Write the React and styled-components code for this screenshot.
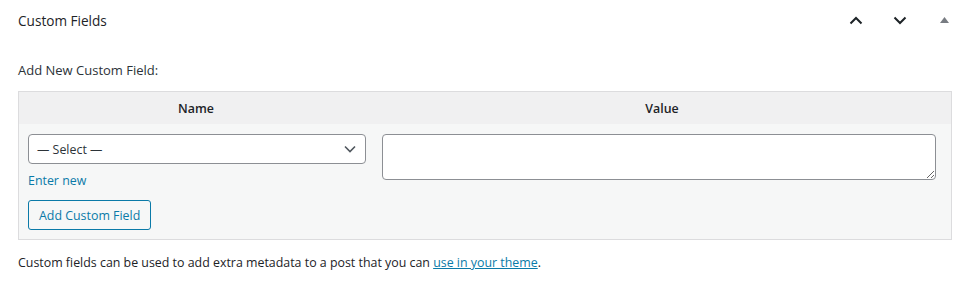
import React from "react";
import styled, { createGlobalStyle } from "styled-components";

const GlobalStyle = createGlobalStyle`
  html, body {
    margin: 0;
    padding: 0;
    background: #fff;
  }
  body {
    font-family: "Open Sans", "Noto Sans", sans-serif;
    font-size: 12.4px;
    color: #1d2327;
  }
  * {
    box-sizing: border-box;
  }
`;

const Box = styled.div`
  width: 960px;
  height: 284px;
  background: #fff;
`;

const Header = styled.div`
  height: 40px;
  display: flex;
  align-items: center;
  justify-content: space-between;
  padding: 0 4px 0 18px;
`;

const Title = styled.h2`
  margin: 0;
  font-size: 13.6px;
  font-weight: 500;
  color: #1d2327;
`;

const Controls = styled.div`
  display: flex;
  align-items: center;
  gap: 20px;
`;

const IconButton = styled.button`
  width: 24px;
  height: 24px;
  padding: 0;
  border: 0;
  background: none;
  display: flex;
  align-items: center;
  justify-content: center;
  color: ${(p) => (p.$muted ? "#787c82" : "#1d2327")};
`;

const Inside = styled.div`
  padding: 21px 8px 0 18px;
`;

const Label = styled.p`
  margin: 0 0 12px;
  line-height: 18px;
  font-size: 13px;
  font-weight: 400;
  color: #2c3338;
`;

const Table = styled.div`
  border: 1px solid #dcdcde;
  background: #f6f7f7;
  display: grid;
  grid-template-columns: 354px 1fr;
`;

const HeadCell = styled.div`
  background: #f0f0f1;
  height: 32px;
  display: flex;
  align-items: center;
  justify-content: center;
  font-weight: 600;
`;

const Cell = styled.div`
  padding: 10px ${(p) => p.$right || 7}px 9px 9px;
  display: flex;
  flex-direction: column;
  align-items: flex-start;
`;

const SelectWrap = styled.div`
  position: relative;
  width: 338px;
`;

const Select = styled.select`
  appearance: none;
  width: 100%;
  height: 30px;
  border: 1px solid #8c8f94;
  border-radius: 4px;
  background: #fff;
  padding: 0 24px 0 8px;
  font-family: inherit;
  font-size: 12.4px;
  color: #2c3338;
`;

const Chevron = styled.svg`
  position: absolute;
  right: 10px;
  top: 11px;
  pointer-events: none;
`;

const TextArea = styled.textarea`
  width: 100%;
  height: 46px;
  border: 1px solid #8c8f94;
  border-radius: 4px;
  background: #fff;
  font-family: inherit;
  font-size: 12.4px;
`;

const Link = styled.a`
  color: #0a7aa8;
  text-decoration: ${(p) => (p.$underline ? "underline" : "none")};
`;

const EnterNew = styled(Link)`
  margin-top: 8px;
  line-height: 18px;
`;

const Button = styled.button`
  margin-top: 10px;
  height: 30px;
  padding: 0 10px;
  border: 1px solid #0a7aa8;
  border-radius: 3px;
  background: #f6f7f7;
  color: #0a7aa8;
  font-family: inherit;
  font-size: 12.4px;
`;

const Note = styled.p`
  margin: 14px 0 0;
  line-height: 18px;
  color: #1d2327;
`;

const ChevronIcon = ({ up }) => (
  <svg width="14" height="9" viewBox="0 0 14 9">
    <path
      d={up ? "M1.5 7.5 L7 2 L12.5 7.5" : "M1.5 1.5 L7 7 L12.5 1.5"}
      fill="none"
      stroke="currentColor"
      strokeWidth="2"
    />
  </svg>
);

export default function App() {
  return (
    <Box>
      <GlobalStyle />
      <Header>
        <Title>Custom Fields</Title>
        <Controls>
          <IconButton>
            <ChevronIcon up />
          </IconButton>
          <IconButton>
            <ChevronIcon />
          </IconButton>
          <IconButton $muted>
            <svg width="9" height="6" viewBox="0 0 9 6">
              <path d="M0 6 L4.5 0 L9 6 Z" fill="currentColor" />
            </svg>
          </IconButton>
        </Controls>
      </Header>
      <Inside>
        <Label>Add New Custom Field:</Label>
        <Table>
          <HeadCell>Name</HeadCell>
          <HeadCell>Value</HeadCell>
          <Cell>
            <SelectWrap>
              <Select defaultValue="">
                <option value="">— Select —</option>
              </Select>
              <Chevron width="12" height="8" viewBox="0 0 12 8">
                <path d="M1 1.5 L6 6.5 L11 1.5" fill="none" stroke="#50575e" strokeWidth="1.6" />
              </Chevron>
            </SelectWrap>
            <EnterNew href="#">Enter new</EnterNew>
            <Button>Add Custom Field</Button>
          </Cell>
          <Cell $right={15}>
            <TextArea />
          </Cell>
        </Table>
        <Note>
          Custom fields can be used to add extra metadata to a post that you can{" "}
          <Link $underline href="#">use in your theme</Link>.
        </Note>
      </Inside>
    </Box>
  );
}
